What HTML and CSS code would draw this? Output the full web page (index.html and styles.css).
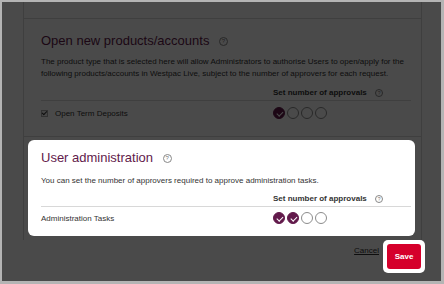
FILE: index.html
```html
<!DOCTYPE html>
<html lang="en">
<head>
    <meta charset="UTF-8">
    <title>Approval settings</title>
    <link rel="stylesheet" href="styles.css">
</head>
<body>

<div class="screen">
    <div class="panel">
        <div class="panel-top"></div>

        <section class="section">
            <h2 class="section-title">Open new products/accounts <span class="help">?</span></h2>
            <p class="section-text">The product type that is selected here will allow Administrators to authorise Users to open/apply for the<br>following products/accounts in Westpac Live, subject to the number of approvers for each request.</p>
            <div class="approvals-head">
                <span></span>
                <span class="approvals-label">Set number of approvals <span class="help small">?</span></span>
            </div>
            <div class="approvals-row">
                <span class="item"><span class="tick"></span>Open Term Deposits</span>
                <span class="dots">
                    <span class="dot on"></span><span class="dot"></span><span class="dot"></span><span class="dot"></span>
                </span>
            </div>
        </section>

        <section class="section card">
            <h2 class="section-title">User administration <span class="help">?</span></h2>
            <p class="section-text">You can set the number of approvers required to approve administration tasks.</p>
            <div class="approvals-head">
                <span></span>
                <span class="approvals-label">Set number of approvals <span class="help small">?</span></span>
            </div>
            <div class="approvals-row">
                <span class="item">Administration Tasks</span>
                <span class="dots">
                    <span class="dot on"></span><span class="dot on"></span><span class="dot"></span><span class="dot"></span>
                </span>
            </div>
        </section>
    </div>

    <div class="footer">
        <a class="cancel-link" href="#">Cancel</a>
        <span class="save-spot"><button type="submit" class="save-btn">Save</button></span>
    </div>

    <div class="overlay"></div>
</div>

</body>
</html>
```

FILE: styles.css
```css
body {
    margin: 0;
    background: #b4b4b4;
    font-family: "Liberation Sans", Arial, sans-serif;
}
.screen {
    position: relative;
    margin: 2px 3px 3px 2px;
    height: 279px;
    overflow: hidden;
    background: #fff;
}
.overlay {
    position: absolute;
    top: 0;
    left: 0;
    right: 0;
    bottom: 0;
    background: rgba(0, 0, 0, 0.71);
    z-index: 1;
}
.panel {
    margin-left: 21px;
    width: 399px;
    box-sizing: border-box;
    border-left: 1px solid #d8d8d8;
    border-right: 1px solid #d8d8d8;
    padding-bottom: 4px;
}
.panel-top {
    height: 16px;
    border-bottom: 1px solid #d8d8d8;
}
.section {
    padding: 14px 10px 17px 17px;
    border-bottom: 1px solid #d8d8d8;
}
.section-title {
    margin: 0;
    font-size: 13px;
    line-height: 16px;
    font-weight: normal;
    color: #621a4b;
}
.section-text {
    margin: 7px 0 0;
    font-size: 8px;
    line-height: 12px;
    color: #333;
}
.help {
    display: inline-block;
    width: 7px;
    height: 7px;
    margin-left: 6px;
    border: 1px solid #888;
    border-radius: 50%;
    font-size: 6px;
    line-height: 7px;
    text-align: center;
    color: #777;
    vertical-align: 2px;
}
.help.small {
    width: 6px;
    height: 6px;
    line-height: 6px;
    font-size: 5px;
    margin-left: 6px;
    font-weight: normal;
    vertical-align: 0;
}
.approvals-head,
.approvals-row {
    display: grid;
    grid-template-columns: 232px 1fr;
}
.approvals-head {
    margin-top: 7px;
    padding-bottom: 1px;
    border-bottom: 1px solid #d8d8d8;
}
.approvals-label {
    font-size: 8px;
    line-height: 12px;
    font-weight: bold;
    color: #333;
}
.approvals-row {
    padding-top: 6px;
}
.item {
    display: flex;
    align-items: center;
    height: 12px;
    font-size: 8px;
    color: #333;
}
.tick {
    position: relative;
    width: 5px;
    height: 5px;
    margin-right: 7px;
    border: 1px solid #aaa;
    background: #eee;
}
.tick::after {
    content: "";
    position: absolute;
    left: 1px;
    top: -1px;
    width: 2px;
    height: 4px;
    border: solid #333;
    border-width: 0 1px 1px 0;
    transform: rotate(45deg);
}
.dots {
    display: flex;
    gap: 2px;
}
.dot {
    position: relative;
    width: 12px;
    height: 12px;
    box-sizing: border-box;
    border: 1px solid #8c8c8c;
    border-radius: 50%;
    background: #fff;
}
.dot.on {
    border-color: #621a4b;
    background: #621a4b;
}
.dot.on::after {
    content: "";
    position: absolute;
    left: 3.5px;
    top: 1.5px;
    width: 2.5px;
    height: 5px;
    border: solid #fff;
    border-width: 0 1.5px 1.5px 0;
    transform: rotate(45deg);
}
.card {
    position: relative;
    z-index: 2;
    margin: 3px 6px 0 4px;
    padding: 10px 4px 12px 13px;
    border-bottom: none;
    border-radius: 6px;
    background: #fff;
}
.card .section-text {
    margin-top: 9px;
}
.card .approvals-head {
    margin-top: 6px;
}
.card .approvals-row {
    padding-top: 5px;
}
.footer {
    display: flex;
    justify-content: flex-end;
    align-items: flex-start;
    margin-left: 21px;
    width: 398px;
}
.cancel-link {
    margin-top: 5px;
    margin-right: 4px;
    font-size: 8px;
    line-height: 12px;
    color: #333;
}
.save-spot {
    position: relative;
    z-index: 2;
    margin-right: -4px;
    padding: 4px;
    border-radius: 5px;
    background: #fff;
}
.save-btn {
    display: block;
    width: 34px;
    height: 25px;
    padding: 0;
    border: none;
    border-radius: 3px;
    background: #d5002b;
    color: #fff;
    font-family: "Liberation Sans", Arial, sans-serif;
    font-size: 8px;
    font-weight: bold;
    cursor: pointer;
}
```
